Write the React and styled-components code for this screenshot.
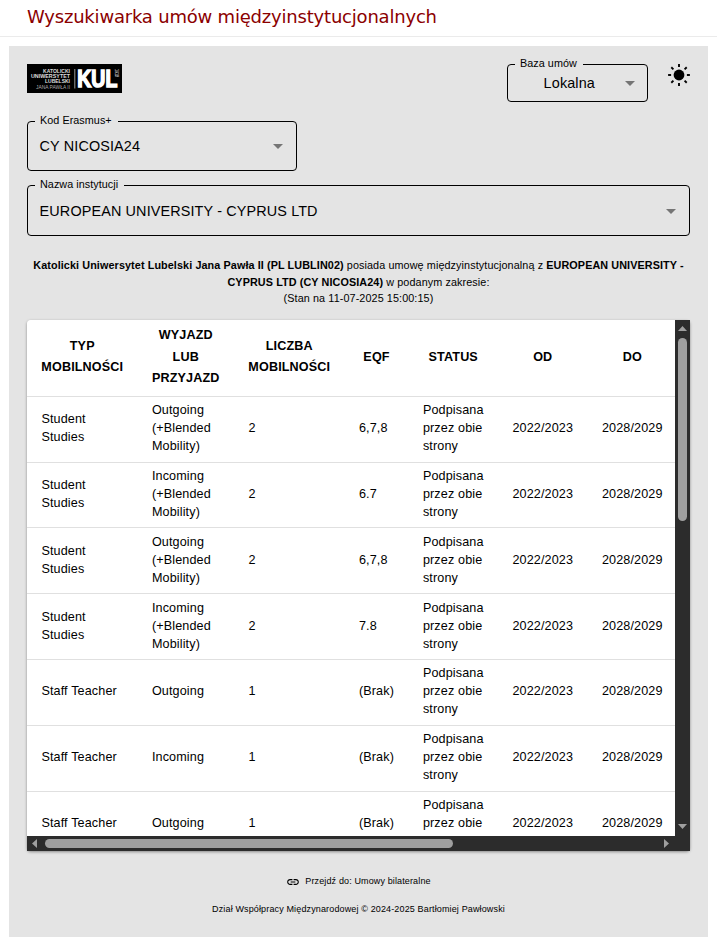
import React from "react";
import styled, { createGlobalStyle } from "styled-components";
import { MdArrowDropDown, MdLink } from "react-icons/md";

const GlobalStyle = createGlobalStyle`
  * { box-sizing: border-box; }
  body {
    margin: 0;
    background: #fff;
    color: #000;
    font-family: "Liberation Sans", Arial, sans-serif;
  }
`;

const Page = styled.div`
  height: 944px;
  overflow: hidden;
`;

const PageHeader = styled.header`
  height: 37px;
  padding-left: 27px;
  border-bottom: 1px solid #ebebeb;
`;

const Title = styled.h1`
  margin: 0;
  font: 400 18px/33px "DejaVu Sans", Verdana, sans-serif;
  letter-spacing: -0.2px;
  color: #8b0000;
`;

const Panel = styled.main`
  display: flex;
  flex-direction: column;
  width: 699px;
  height: 891px;
  margin: 9px 0 0 9px;
  padding: 12px 18px 0;
  background: #e4e4e4;
`;

const TopBar = styled.div`
  display: flex;
  align-items: flex-start;
  height: 57px;
`;

const Logo = styled.svg`
  display: block;
  width: 95px;
  height: 29px;
  margin: 6px auto 0 0;
`;

const Field = styled.fieldset`
  width: ${(p) => p.$width}px;
  height: ${(p) => p.$height}px;
  min-width: 0;
  margin: 0 0 ${(p) => p.$gap || 0}px;
  padding: 0 ${(p) => (p.$compact ? 5 : 6)}px 0 7px;
  border: 1px solid #000;
  border-radius: 4px;
`;

const FieldLabel = styled.legend`
  height: 13px;
  padding: 0 6px 2px 5px;
  font-size: 10.8px;
  line-height: 11px;
  letter-spacing: 0.05px;
`;

const FieldValue = styled.div`
  display: flex;
  align-items: center;
  height: ${(p) => p.$height}px;
  padding: 0 0 6px 4.6px;
  font-size: 14.4px;
  letter-spacing: 0.135px;
`;

const ValueText = styled.span`
  flex: 1;
  padding-left: ${(p) => (p.$centered ? 1 : 0)}px;
  text-align: ${(p) => (p.$centered ? "center" : "left")};
`;

const DropIcon = styled(MdArrowDropDown)`
  flex: none;
  width: 24px;
  height: 24px;
  color: #757575;
`;

const ThemeIcon = styled.svg`
  width: 24px;
  height: 24px;
  margin: 5px -1px 0 19px;
`;

const Summary = styled.p`
  height: 63px;
  margin: 21px 0 0;
  font-size: 10.8px;
  line-height: 16.6px;
  text-align: center;
  letter-spacing: 0.1px;
`;

const TableCard = styled.section`
  display: grid;
  grid-template: 516px 15px / 648px 15px;
  width: 663px;
  border-radius: 4px 0 0 0;
  overflow: hidden;
  background: #fff;
`;

const CardShadow = styled.div`
  border-radius: 4px;
  box-shadow: 0 1px 3px rgba(0, 0, 0, 0.4);
`;

const TableView = styled.div`
  overflow: hidden;
`;

const Table = styled.table`
  width: 650px;
  table-layout: fixed;
  border-collapse: separate;
  border-spacing: 0;
  font-size: 12.6px;
  letter-spacing: 0.135px;
`;

const Column = styled.col`
  width: ${(p) => p.$width}px;
`;

const HeadCell = styled.th`
  height: 76.9px;
  padding: 0 0 1px;
  border-bottom: 1px solid #e0e0e0;
  font-weight: 700;
  line-height: 21.6px;
  white-space: pre-line;
`;

const Cell = styled.td`
  height: 65.8px;
  padding: 0 0 2px 14.4px;
  border-bottom: 1px solid #e0e0e0;
  line-height: 18px;
  white-space: pre-line;
`;

const Track = styled.div`
  display: flex;
  flex-direction: ${(p) => (p.$horizontal ? "row" : "column")};
  align-items: center;
  justify-content: space-between;
  background: #2c2c2c;
  padding: ${(p) => (p.$horizontal ? "0 6px 0 5px" : "6px 0 7px")};
`;

const Thumb = styled.div`
  flex: none;
  width: ${(p) => (p.$horizontal ? 408 : 9)}px;
  height: ${(p) => (p.$horizontal ? 9 : 183)}px;
  margin: ${(p) => (p.$horizontal ? "0 auto 0 8px" : "7px 0 auto")};
  border-radius: 5px;
  background: #9f9f9f;
`;

const Corner = styled.div`
  background: #2c2c2c;
`;

const Arrow = styled.svg`
  flex: none;
  display: block;
  fill: #9f9f9f;
`;

const BilateralLink = styled.a`
  display: flex;
  align-items: center;
  justify-content: center;
  gap: 5px;
  height: 16px;
  margin-top: 22px;
  font-size: 9px;
  letter-spacing: 0.13px;

  svg {
    width: 14px;
    height: 14px;
    margin-top: 2px;
  }
`;

const Copyright = styled.footer`
  margin-top: 14px;
  font-size: 9px;
  line-height: 12px;
  letter-spacing: 0.14px;
  text-align: center;
`;

const columns = [
  { label: "TYP\nMOBILNOŚCI", width: 110.5 },
  { label: "WYJAZD\nLUB\nPRZYJAZD", width: 96.5 },
  { label: "LICZBA\nMOBILNOŚCI", width: 110.5 },
  { label: "EQF", width: 64 },
  { label: "STATUS", width: 89.5 },
  { label: "OD", width: 89.5 },
  { label: "DO", width: 89.5 },
];

const student = "Student\nStudies";
const blendedOut = "Outgoing\n(+Blended\nMobility)";
const blendedIn = "Incoming\n(+Blended\nMobility)";
const rows = [
  [student, blendedOut, "2", "6,7,8"],
  [student, blendedIn, "2", "6.7"],
  [student, blendedOut, "2", "6,7,8"],
  [student, blendedIn, "2", "7.8"],
  ["Staff Teacher", "Outgoing", "1", "(Brak)"],
  ["Staff Teacher", "Incoming", "1", "(Brak)"],
  ["Staff Teacher", "Outgoing", "1", "(Brak)"],
].map((row) => [...row, "Podpisana\nprzez obie\nstrony", "2022/2023", "2028/2029"]);

const rayAngles = [0, 45, 90, 135, 180, 225, 270, 315];

function SunIcon() {
  return (
    <ThemeIcon viewBox="-12 -12 24 24" stroke="#000" strokeWidth="1.9">
      <circle r="5.4" stroke="none" />
      {rayAngles.map((angle) => (
        <path key={angle} d="M7.9 0h3" transform={`rotate(${angle})`} />
      ))}
    </ThemeIcon>
  );
}

function KulLogo() {
  return (
    <Logo viewBox="0 0 95 29" fontFamily="Liberation Sans, Arial, sans-serif">
      <rect width="95" height="29" fill="#000" />
      <g fill="#ddd" fontSize="5" fontWeight="700" textAnchor="end">
        <text x="43" y="8.8" textLength="27" lengthAdjust="spacingAndGlyphs">KATOLICKI</text>
        <text x="43" y="14.2" textLength="39" lengthAdjust="spacingAndGlyphs">UNIWERSYTET</text>
        <text x="43" y="19.4" textLength="25" lengthAdjust="spacingAndGlyphs">LUBELSKI</text>
        <text x="43" y="24.8" fontWeight="400" fillOpacity="0.8" textLength="34" lengthAdjust="spacingAndGlyphs">JANA PAWŁA II</text>
      </g>
      <rect x="47.3" y="5" width="1" height="19.5" fill="#999" />
      <text x="50.3" y="23.3" fill="#fff" stroke="#fff" strokeWidth="1.6" fontSize="24" fontWeight="700" textLength="40" lengthAdjust="spacingAndGlyphs">KUL</text>
      <text transform="translate(87.5 5) rotate(90)" fill="#fff" fontSize="4.5" textLength="8" lengthAdjust="spacingAndGlyphs">1918</text>
    </Logo>
  );
}

function SelectField({ label, value, width, height, gap, compact }) {
  return (
    <Field $width={width} $height={height} $gap={gap} $compact={compact}>
      <FieldLabel>{label}</FieldLabel>
      <FieldValue $height={height - 14}>
        <ValueText $centered={compact}>{value}</ValueText>
        <DropIcon />
      </FieldValue>
    </Field>
  );
}

export default function App() {
  return (
    <Page>
      <GlobalStyle />
      <PageHeader>
        <Title>Wyszukiwarka umów międzyinstytucjonalnych</Title>
      </PageHeader>
      <Panel>
        <TopBar>
          <KulLogo />
          <SelectField label="Baza umów" value="Lokalna" width={141} height={44} compact />
          <SunIcon />
        </TopBar>
        <SelectField label="Kod Erasmus+" value="CY NICOSIA24" width={270} height={56} gap={8} />
        <SelectField label="Nazwa instytucji" value="EUROPEAN UNIVERSITY - CYPRUS LTD" width={663} height={57} />
        <Summary>
          <b>Katolicki Uniwersytet Lubelski Jana Pawła II (PL LUBLIN02)</b> posiada umowę
          międzyinstytucjonalną z <b>EUROPEAN UNIVERSITY -<br />CYPRUS LTD (CY NICOSIA24)</b> w podanym
          zakresie:
          <br />
          (Stan na 11-07-2025 15:00:15)
        </Summary>
        <CardShadow>
          <TableCard>
            <TableView>
              <Table>
                <colgroup>
                  {columns.map((c, i) => (
                    <Column key={i} $width={c.width} />
                  ))}
                </colgroup>
                <thead>
                  <tr>
                    {columns.map((c, i) => (
                      <HeadCell key={i}>{c.label}</HeadCell>
                    ))}
                  </tr>
                </thead>
                <tbody>
                  {rows.map((row, i) => (
                    <tr key={i}>
                      {row.map((text, j) => (
                        <Cell key={j}>{text}</Cell>
                      ))}
                    </tr>
                  ))}
                </tbody>
              </Table>
            </TableView>
            <Track>
              <Arrow width="9" height="5"><path d="M0 5 4.5 0 9 5z" /></Arrow>
              <Thumb />
              <Arrow width="9" height="5"><path d="M0 0h9L4.5 5z" /></Arrow>
            </Track>
            <Track $horizontal>
              <Arrow width="5" height="9"><path d="M5 0v9L0 4.5z" /></Arrow>
              <Thumb $horizontal />
              <Arrow width="5" height="9"><path d="M0 0v9l5-4.5z" /></Arrow>
            </Track>
            <Corner />
          </TableCard>
        </CardShadow>
        <BilateralLink>
          <MdLink />
          <span>Przejdź do: Umowy bilateralne</span>
        </BilateralLink>
        <Copyright>Dział Współpracy Międzynarodowej © 2024-2025 Bartłomiej Pawłowski</Copyright>
      </Panel>
    </Page>
  );
}
